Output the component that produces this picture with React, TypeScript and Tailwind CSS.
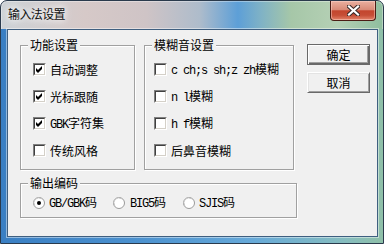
import React from "react";

const latin = "font-['Liberation_Mono',monospace] tracking-[-1.2px]";

function Check({ checked }: { checked?: boolean }) {
  return (
    <span className="block w-[13px] h-[13px] shrink-0 border border-t-[#808080] border-l-[#808080] border-b-white border-r-white">
      <span className="block w-[11px] h-[11px] border border-t-[#404040] border-l-[#404040] border-b-[#d4d0c8] border-r-[#d4d0c8] bg-white">
        {checked && (
          <svg width="9" height="9" viewBox="0 0 9 9" className="block">
            <polygon points="1,3 3,5 7,1 7,4 3,8 1,6" fill="#000" />
          </svg>
        )}
      </span>
    </span>
  );
}

function Radio({ checked }: { checked?: boolean }) {
  return (
    <svg width="12" height="12" viewBox="0 0 12 12" className="block shrink-0">
      <circle cx="6" cy="6" r="5.5" fill="#fff" stroke="#9a9a9a" />
      <path d="M1.8 8.5 A4.8 4.8 0 0 1 8.5 1.8" fill="none" stroke="#c8c8c8" strokeWidth="1" />
      {checked && <circle cx="6" cy="6" r="2" fill="#000" />}
    </svg>
  );
}

function Group({
  title,
  className,
  children,
}: {
  title: string;
  className: string;
  children?: React.ReactNode;
}) {
  return (
    <div
      className={`relative border border-[#a0a0a0] shadow-[inset_1px_1px_0_#fff,1px_1px_0_#fff] ${className}`}
    >
      <span className="absolute left-[7px] -top-[8px] px-[2px] bg-[#f0f0f0] leading-[14px]">
        {title}
      </span>
      {children}
    </div>
  );
}

function Row({ checked, children }: { checked?: boolean; children: React.ReactNode }) {
  return (
    <div className="flex items-center gap-[4px] h-[13px]">
      <Check checked={checked} />
      <span className="leading-[13px] whitespace-nowrap">{children}</span>
    </div>
  );
}

export default function App() {
  return (
    <div className="w-[384px] h-[244px] flex flex-col border border-[#2a3a4c] rounded-t-[7px] overflow-hidden bg-[linear-gradient(to_right,#cdd2d6_0%,#d6c9c8_22%,#cfc4c6_38%,#aebccb_52%,#5d9fd7_62%,#7fb2c6_68%,#a6c7a8_76%,#b5d0b5_88%,#8fbe9e_100%)] font-['Noto_Sans_CJK_SC',sans-serif] text-[12px] text-black shadow-[inset_0_0_0_1px_rgba(255,255,255,0.35)]">
      <div className="h-[28px] flex items-start justify-between pl-[7px] pr-[7px]">
        <span className="mt-[6px] leading-[14px] text-[12px] text-[#111] tracking-[-0.6px] [text-shadow:0_0_6px_#fff,0_0_10px_#fff]">
          输入法设置
        </span>
        <div className="w-[46px] h-[20px] flex items-center justify-center border border-t-0 border-[#4b1c14] rounded-b-[4px] bg-[linear-gradient(to_bottom,#eab0a0_0%,#d98b78_45%,#c4462e_52%,#c64e36_75%,#e3836a_100%)] shadow-[inset_0_0_0_1px_rgba(255,220,210,0.45)]">
          <svg width="13" height="11" viewBox="0 0 13 11" className="block">
            <path d="M2 1.5 L11 9.5 M11 1.5 L2 9.5" stroke="#3a2a28" strokeWidth="4.2" strokeLinecap="square" />
            <path d="M2 1.5 L11 9.5 M11 1.5 L2 9.5" stroke="#fff" strokeWidth="2.2" strokeLinecap="square" />
          </svg>
        </div>
      </div>
      <div className="flex-1 flex pl-[6px] pr-[5px] pb-[6px] bg-[linear-gradient(to_right,#3a7fc3_0%,#4b91cf_35%,#66a9d9_65%,#86bdbf_90%,#8fc0a8_100%)]">
        <div className="flex-1 flex items-start border border-[#3f5f80] bg-[#f0f0f0] shadow-[0_0_0_1px_rgba(255,255,255,0.45)] pl-[12px] pt-[14px]">
          <div className="flex flex-col pt-[1px]">
            <div className="flex">
              <Group title="功能设置" className="w-[115px] h-[125px]">
                <div className="flex flex-col gap-[14px] pt-[17px] pl-[12px]">
                  <Row checked>自动调整</Row>
                  <Row checked>光标跟随</Row>
                  <Row checked>
                    <span className={latin}>GBK</span>字符集
                  </Row>
                  <Row>传统风格</Row>
                </div>
              </Group>
              <Group title="模糊音设置" className="w-[150px] h-[125px] ml-[9px]">
                <div className="flex flex-col gap-[14px] pt-[17px] pl-[9px]">
                  <Row>
                    <span className={latin}>c ch;s sh;z zh</span>模糊
                  </Row>
                  <Row>
                    <span className={latin}>n l</span>模糊
                  </Row>
                  <Row>
                    <span className={latin}>h f</span>模糊
                  </Row>
                  <Row>后鼻音模糊</Row>
                </div>
              </Group>
            </div>
            <Group title="输出编码" className="w-[277px] h-[35px] mt-[13px]">
              <div className="flex items-center pt-[12px] pl-[12px]">
                <div className="w-[80px] flex items-center gap-[4px]">
                  <Radio checked />
                  <span className="leading-[12px] whitespace-nowrap">
                    <span className={latin}>GB/GBK</span>码
                  </span>
                </div>
                <div className="w-[70px] flex items-center gap-[5px]">
                  <Radio />
                  <span className="leading-[12px] whitespace-nowrap">
                    <span className={latin}>BIG5</span>码
                  </span>
                </div>
                <div className="flex items-center gap-[4px]">
                  <Radio />
                  <span className="leading-[12px] whitespace-nowrap">
                    <span className={latin}>SJIS</span>码
                  </span>
                </div>
              </div>
            </Group>
          </div>
          <div className="flex flex-col gap-[7px] ml-[10px]">
            <button className="w-[63px] h-[21px] flex items-center justify-center border border-[#696969] bg-[#f0f0f0] shadow-[inset_1px_1px_0_#fff,inset_-1px_-1px_0_#696969,inset_-2px_-2px_0_#a0a0a0] leading-[14px]">
              确定
            </button>
            <button className="w-[63px] h-[21px] flex items-center justify-center border border-t-white border-l-white border-b-[#696969] border-r-[#696969] bg-[#f0f0f0] shadow-[inset_1px_1px_0_#e3e3e3,inset_-1px_-1px_0_#a0a0a0] leading-[14px]">
              取消
            </button>
          </div>
        </div>
      </div>
    </div>
  );
}
